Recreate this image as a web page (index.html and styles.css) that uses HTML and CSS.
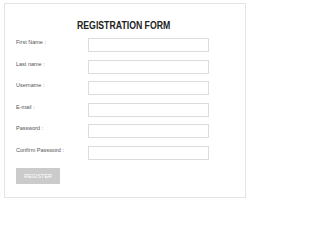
FILE: index.html
```html
<!DOCTYPE html>
<html>
<head>
<meta charset="utf-8">
<link rel="stylesheet" href="styles.css">
</head>
<body>
<div class="card">
  <h1 class="title"><span class="title-text">REGISTRATION FORM</span></h1>
  <form class="form">
    <div class="row"><label class="label">First Name :</label><input class="field" type="text"></div>
    <div class="row"><label class="label">Last name :</label><input class="field" type="text"></div>
    <div class="row"><label class="label">Username :</label><input class="field" type="text"></div>
    <div class="row"><label class="label">E-mail :</label><input class="field" type="text"></div>
    <div class="row"><label class="label">Password :</label><input class="field" type="password"></div>
    <div class="row"><label class="label">Confirm Password :</label><input class="field" type="password"></div>
    <button class="btn" type="button">REGISTER</button>
  </form>
</div>
</body>
</html>
```
FILE: styles.css
```css
html, body {
  margin: 0;
  padding: 0;
  background: #fff;
}
.card {
  box-sizing: border-box;
  width: 242px;
  height: 195px;
  margin: 3px 0 0 4px;
  border: 1px solid #e4e4e4;
  padding: 0 0 0 11px;
  font-family: "Liberation Sans", Arial, sans-serif;
}
.title {
  margin: 15px 0 0 0;
  padding-left: 61px;
  font-family: "Liberation Sans", Arial, sans-serif;
  font-size: 10.5px;
  line-height: 12px;
  font-weight: bold;
  color: #222;
}
.title-text {
  display: inline-block;
  transform: scaleX(0.83);
  transform-origin: left center;
  white-space: nowrap;
}
.form {
  display: flex;
  flex-direction: column;
  gap: 7.6px;
  margin-top: 7px;
}
.row {
  display: flex;
  align-items: flex-start;
}
.label {
  width: 72px;
  font-size: 5.5px;
  line-height: 7px;
  padding-top: 1px;
  color: #555;
}
.field {
  box-sizing: border-box;
  width: 121px;
  height: 14px;
  margin: 0;
  padding: 0;
  border: 1px solid #dcdcdc;
  border-radius: 0;
  background: #fff;
  outline: none;
}
.btn {
  box-sizing: border-box;
  align-self: flex-start;
  width: 44px;
  height: 16px;
  margin-top: 0.5px;
  padding: 0;
  border: none;
  border-radius: 0;
  background: #cbcbcb;
  color: #fff;
  font-family: "Liberation Sans", Arial, sans-serif;
  font-size: 5.5px;
}
```
